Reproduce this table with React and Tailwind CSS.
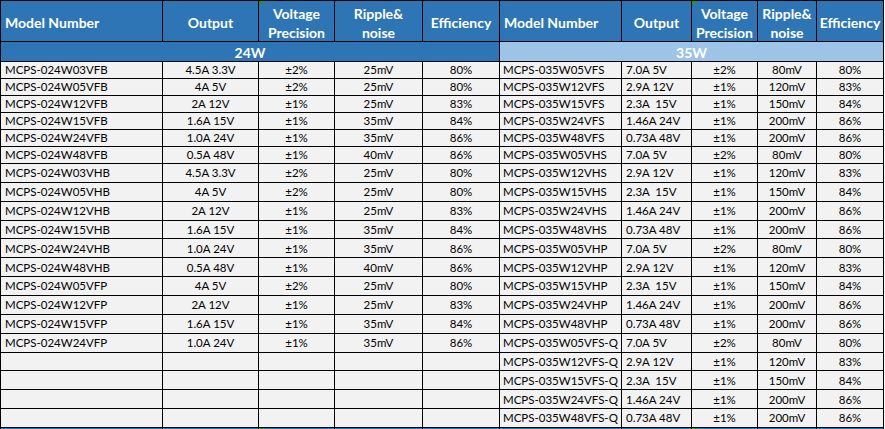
import React from "react";

const left = [
  ["MCPS-024W03VFB", "4.5A 3.3V", "±2%", "25mV", "80%"],
  ["MCPS-024W05VFB", "4A 5V", "±2%", "25mV", "80%"],
  ["MCPS-024W12VFB", "2A 12V", "±1%", "25mV", "83%"],
  ["MCPS-024W15VFB", "1.6A 15V", "±1%", "35mV", "84%"],
  ["MCPS-024W24VFB", "1.0A 24V", "±1%", "35mV", "86%"],
  ["MCPS-024W48VFB", "0.5A 48V", "±1%", "40mV", "86%"],
  ["MCPS-024W03VHB", "4.5A 3.3V", "±2%", "25mV", "80%"],
  ["MCPS-024W05VHB", "4A 5V", "±2%", "25mV", "80%"],
  ["MCPS-024W12VHB", "2A 12V", "±1%", "25mV", "83%"],
  ["MCPS-024W15VHB", "1.6A 15V", "±1%", "35mV", "84%"],
  ["MCPS-024W24VHB", "1.0A 24V", "±1%", "35mV", "86%"],
  ["MCPS-024W48VHB", "0.5A 48V", "±1%", "40mV", "86%"],
  ["MCPS-024W05VFP", "4A 5V", "±2%", "25mV", "80%"],
  ["MCPS-024W12VFP", "2A 12V", "±1%", "25mV", "83%"],
  ["MCPS-024W15VFP", "1.6A 15V", "±1%", "35mV", "84%"],
  ["MCPS-024W24VFP", "1.0A 24V", "±1%", "35mV", "86%"],
  ["", "", "", "", ""],
  ["", "", "", "", ""],
  ["", "", "", "", ""],
  ["", "", "", "", ""],
];

const rightBase = [
  ["05", "7.0A 5V", "±2%", "80mV", "80%"],
  ["12", "2.9A 12V", "±1%", "120mV", "83%"],
  ["15", "2.3A  15V", "±1%", "150mV", "84%"],
  ["24", "1.46A 24V", "±1%", "200mV", "86%"],
  ["48", "0.73A 48V", "±1%", "200mV", "86%"],
];
const suffixes = ["VFS", "VHS", "VHP", "VFS-Q"];
const right = [];
suffixes.forEach((s) => {
  rightBase.forEach((r) => {
    right.push(["MCPS-035W" + r[0] + s, r[1], r[2], r[3], r[4]]);
  });
});

const Tri = () => (
  <span className="absolute left-0 top-0 w-0 h-0 border-t-[5px] border-r-[5px] border-t-[#1f9a1f] border-r-transparent" />
);

const H = ({ children, tri }) => (
  <div className="relative border-r border-b border-black bg-[#2e75b6] text-white font-bold text-[14px] leading-[19px] flex items-center justify-center text-center pt-[3px] whitespace-nowrap overflow-hidden">
    {tri && <Tri />}
    <span>{children}</span>
  </div>
);

const HL = ({ children }) => (
  <div className="border-r border-b border-black bg-[#2e75b6] text-white font-bold text-[14px] leading-[19px] flex items-center pl-[4px] pt-[3px] whitespace-nowrap">
    {children}
  </div>
);

const C = ({ children, align = "center", pl = "pl-[4px]" }) => (
  <div
    className={
      "border-r border-b border-black bg-[#f2f2f2] text-black text-[11.5px] flex items-center whitespace-pre overflow-hidden " +
      (align === "center" ? "justify-center" : pl)
    }
  >
    {children}
  </div>
);

export default function App() {
  return (
    <div className="w-[885px] h-[429px] overflow-hidden bg-white font-['Lato',sans-serif]">
      <div className="grid w-[884px] border-l border-t border-black grid-cols-[162px_96px_76px_88px_77px_122px_70px_66px_59px_67px] grid-rows-[41px_20px_repeat(6,17px)_repeat(14,18.87px)_8px]">
        <HL>Model Number</HL>
        <H>Output</H>
        <H tri>
          Voltage
          <br />
          Precision
        </H>
        <H>
          Ripple&amp;
          <br />
          noise
        </H>
        <H>Efficiency</H>
        <HL>Model Number</HL>
        <H>Output</H>
        <H tri>
          Voltage
          <br />
          Precision
        </H>
        <H>
          Ripple&amp;
          <br />
          noise
        </H>
        <H>Efficiency</H>

        <div className="col-span-5 border-r border-b border-black bg-[#2e75b6] text-white font-bold text-[14px] flex items-center justify-center pt-[1px]">
          24W
        </div>
        <div className="col-span-5 border-r border-b border-black bg-[#9dc3e6] text-white font-bold text-[14px] flex items-center justify-center pt-[1px]">
          35W
        </div>

        {left.map((l, i) => {
          const r = right[i];
          return (
            <React.Fragment key={i}>
              <C align="left">{l[0]}</C>
              <C>{l[1]}</C>
              <C>{l[2]}</C>
              <C>{l[3]}</C>
              <C>{l[4]}</C>
              <C align="left" pl="pl-[3px]">{r[0]}</C>
              <C align="left">{r[1]}</C>
              <C>{r[2]}</C>
              <C>{r[3]}</C>
              <C>{r[4]}</C>
            </React.Fragment>
          );
        })}

        {Array.from({ length: 10 }).map((_, i) => (
          <div key={i} className="relative border-r border-black bg-[#2e75b6]">
            {(i === 2 || i === 7) && <Tri />}
          </div>
        ))}
      </div>
    </div>
  );
}
